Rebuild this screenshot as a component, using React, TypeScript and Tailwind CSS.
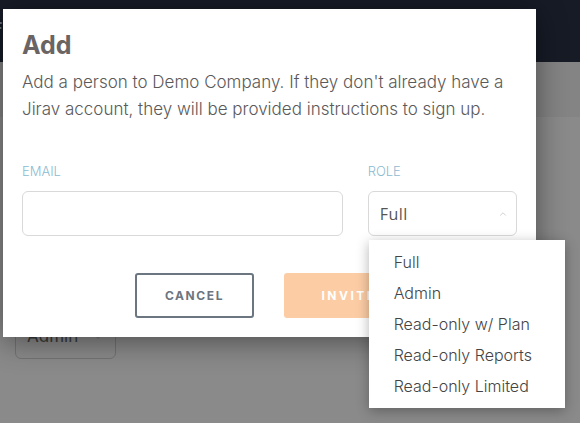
import { ChevronDown, ChevronUp } from 'lucide-react';

const roles = ['Full', 'Admin', 'Read-only w/ Plan', 'Read-only Reports', 'Read-only Limited'];

export default function App() {
  return (
    <div className="relative w-[580px] h-[423px] overflow-hidden bg-[#8a8a8a] font-['Inter',sans-serif]">
      {/* page behind the modal (already dimmed by the overlay) */}
      <div className="h-[62px] bg-[#161b26] flex items-start pt-[18px]">
        <span className="text-[#6f7480] text-[16px] font-bold -ml-[7px] leading-5">F</span>
      </div>
      <div className="h-[55px] bg-[#848484]" />
      <div className="pl-[15px] pt-[198px]">
        <div className="w-[101px] h-[44px] border border-[#737373] rounded-md flex items-center justify-between px-[11px] text-[#3b3b3b] text-[17px]">
          <span>Admin</span>
          <ChevronDown className="w-3 h-3 text-[#6e6e6e]" />
        </div>
      </div>

      {/* modal */}
      <div className="absolute left-[3px] top-[9px] w-[533px] h-[328px] bg-white shadow-[0_4px_28px_rgba(0,0,0,0.45)] px-[19px] pt-[20px]">
        <h1 className="text-[25px] leading-[32px] font-bold text-[#6b6464]">Add</h1>
        <p className="mt-[8px] text-[17px] leading-[27px] font-light text-[#5a5a5a]">
          Add a person to Demo Company. If they don't already have a Jirav account, they will be provided instructions to sign up.
        </p>

        <div className="mt-[40px] flex gap-[25px]">
          <div className="w-[322px]">
            <div className="text-[13px] font-light text-[#8dbbd0] leading-4">EMAIL</div>
            <div className="mt-[12px] h-[45px] border border-[#d9d9d9] rounded-[6px]" />
          </div>
          <div className="relative w-[150px]">
            <div className="text-[13px] font-light text-[#8dbbd0] leading-4">ROLE</div>
            <div className="mt-[12px] h-[45px] border border-[#d9d9d9] rounded-[6px] flex items-center justify-between pl-[11px] pr-[8px]">
              <span className="text-[16px] text-[#555] font-['Open_Sans',sans-serif] tracking-[0.5px]">Full</span>
              <ChevronUp className="w-[10px] h-[10px] text-[#c8c8c8]" strokeWidth={2} />
            </div>

            {/* open dropdown */}
            <div className="absolute left-px top-[77px] z-10 w-[196px] bg-white shadow-[0_3px_12px_rgba(0,0,0,0.3)] pt-[6px] pb-[7px]">
              {roles.map((r) => (
                <div key={r} className="pl-[25px] h-[31px] flex items-center text-[16px] text-[#444] font-light">
                  {r}
                </div>
              ))}
            </div>
          </div>
        </div>

        <div className="mt-[37px] flex gap-[30px] pl-[113px]">
          <button className="w-[119px] h-[45px] border-2 border-[#6b7680] rounded-[3px] text-[12px] font-bold tracking-[1.6px] text-[#6b7680]">
            CANCEL
          </button>
          <button className="w-[130px] h-[45px] rounded-[3px] bg-[#fccda5] text-[12px] font-bold tracking-[2.5px] text-white">
            INVITE
          </button>
        </div>
      </div>
    </div>
  );
}
